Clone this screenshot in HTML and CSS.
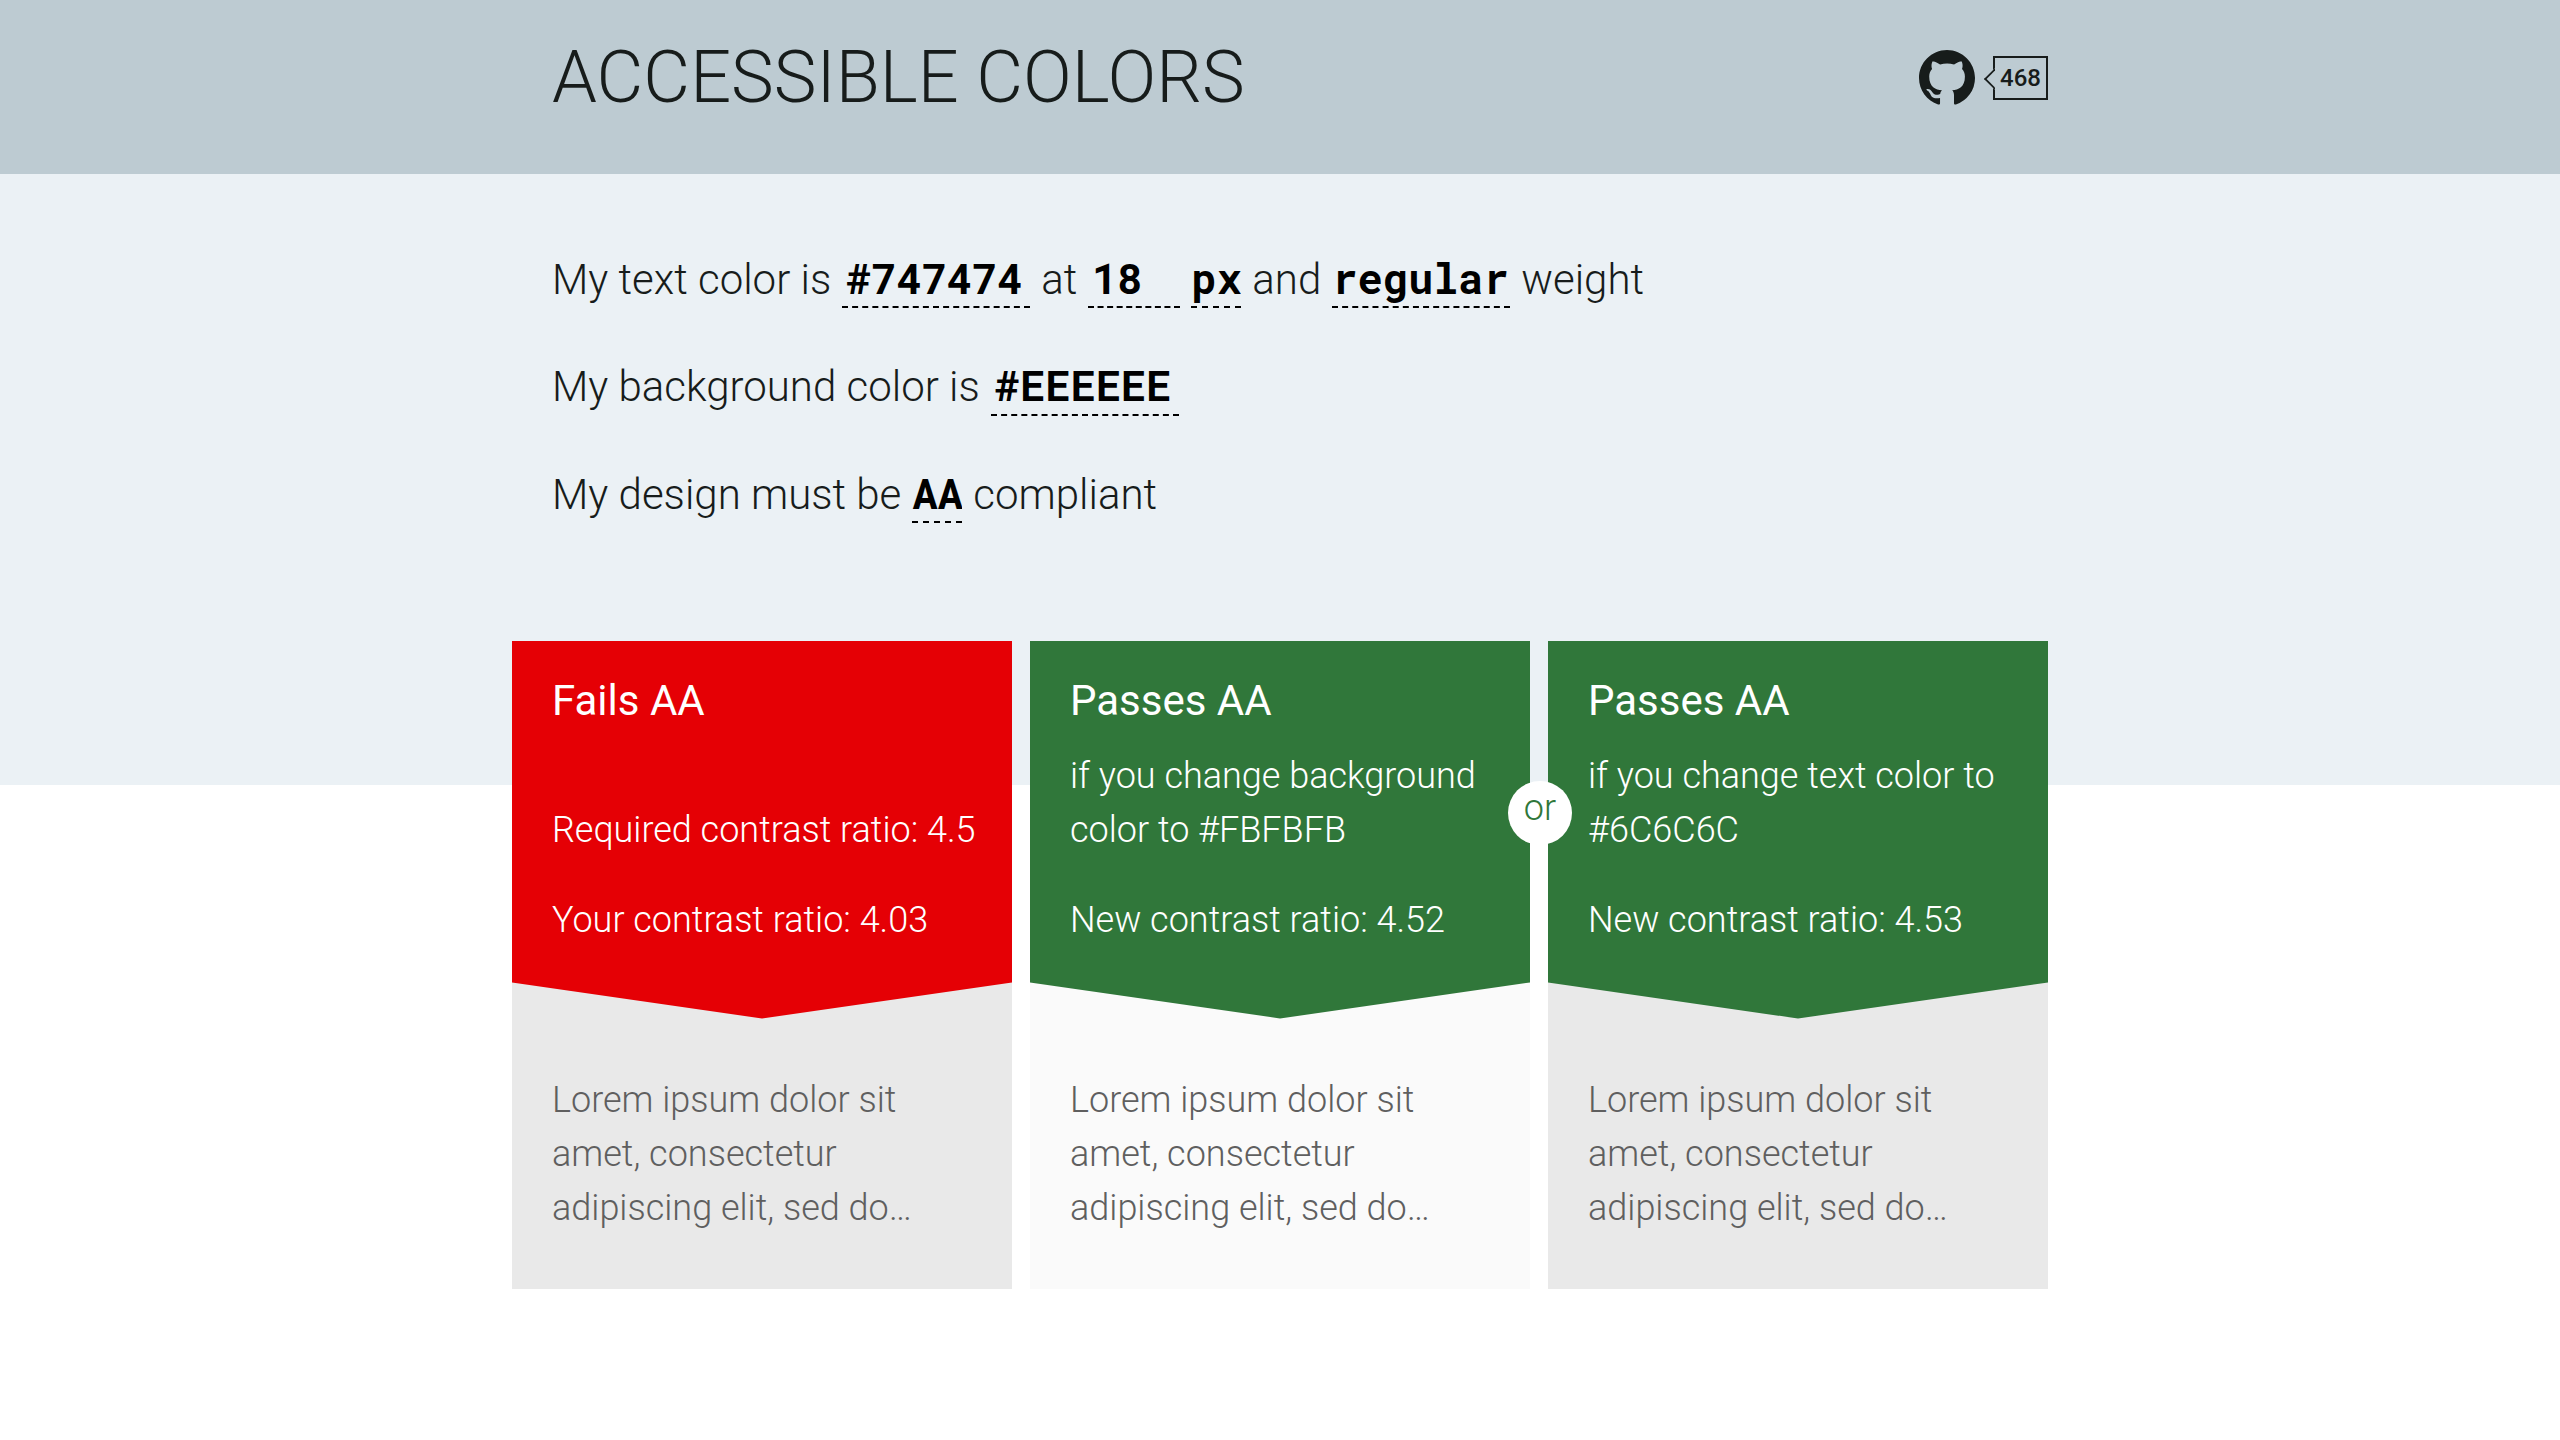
FILE: index.html
```html
<!DOCTYPE html>
<html lang="en">
<head>
    <meta charset="UTF-8">
    <meta name="viewport" content="width=device-width, initial-scale=1.0">
    <title>Accessible Colors</title>
    <link rel="stylesheet" href="styles.css">
</head>
<body>
    <header class="header">
        <div class="container header__inner">
            <h1 class="header__title">Accessible Colors</h1>
            <div class="github">
                <a class="github__link" href="#" aria-label="GitHub">
                    <svg class="github__icon" viewBox="0 0 16 16" aria-hidden="true">
                        <path d="M8 0C3.58 0 0 3.58 0 8c0 3.54 2.29 6.53 5.47 7.59.4.07.55-.17.55-.38 0-.19-.01-.82-.01-1.49-2.01.37-2.53-.49-2.69-.94-.09-.23-.48-.94-.82-1.13-.28-.15-.68-.52-.01-.53.63-.01 1.08.58 1.23.82.72 1.21 1.87.87 2.33.66.07-.52.28-.87.51-1.07-1.78-.2-3.64-.89-3.64-3.95 0-.87.31-1.59.82-2.15-.08-.2-.36-1.02.08-2.12 0 0 .67-.21 2.2.82.64-.18 1.32-.27 2-.27s1.36.09 2 .27c1.53-1.04 2.2-.82 2.2-.82.44 1.1.16 1.92.08 2.12.51.56.82 1.27.82 2.15 0 3.07-1.87 3.75-3.65 3.95.29.25.54.73.54 1.48 0 1.07-.01 1.93-.01 2.2 0 .21.15.46.55.38A8.01 8.01 0 0 0 16 8c0-4.42-3.58-8-8-8z"/>
                    </svg>
                </a>
                <a class="github__count" href="#">468</a>
            </div>
        </div>
    </header>
    <main>
        <form class="settings">
            <div class="container settings__inner">
                <div class="settings__row">
                    <label for="textColor">My text color is</label>
                    <input class="field field--color" type="text" id="textColor" value="#747474">
                    <label for="fontSize">at</label>
                    <input class="field field--size" type="text" id="fontSize" value="18">
                    <select class="field field--short" id="fontUnit" aria-label="Font size unit">
                        <option>px</option>
                        <option>pt</option>
                    </select>
                    <label for="fontWeight">and</label>
                    <select class="field field--weight" id="fontWeight">
                        <option>regular</option>
                        <option>bold</option>
                    </select>
                    <span>weight</span>
                </div>
                <div class="settings__row">
                    <label for="bgColor">My background color is</label>
                    <input class="field field--color" type="text" id="bgColor" value="#EEEEEE">
                </div>
                <div class="settings__row">
                    <label for="level">My design must be</label>
                    <select class="field field--short" id="level">
                        <option>AA</option>
                        <option>AAA</option>
                    </select>
                    <span>compliant</span>
                </div>
            </div>
        </form>
        <div class="container results">
            <section class="card card--fail">
                <div class="card__result">
                    <h2 class="card__title">Fails AA</h2>
                    <p class="card__text">Required contrast ratio: 4.5</p>
                    <p class="card__ratio">Your contrast ratio: 4.03</p>
                </div>
                <p class="card__sample">Lorem ipsum dolor sit amet, consectetur adipiscing elit, sed do…</p>
            </section>
            <section class="card card--background">
                <div class="card__result">
                    <h2 class="card__title">Passes AA</h2>
                    <p class="card__text">if you change background color to #FBFBFB</p>
                    <p class="card__ratio">New contrast ratio: 4.52</p>
                </div>
                <p class="card__sample">Lorem ipsum dolor sit amet, consectetur adipiscing elit, sed do…</p>
                <span class="card__or">or</span>
            </section>
            <section class="card card--text">
                <div class="card__result">
                    <h2 class="card__title">Passes AA</h2>
                    <p class="card__text">if you change text color to #6C6C6C</p>
                    <p class="card__ratio">New contrast ratio: 4.53</p>
                </div>
                <p class="card__sample">Lorem ipsum dolor sit amet, consectetur adipiscing elit, sed do…</p>
            </section>
        </div>
    </main>
</body>
</html>
```
FILE: styles.css
```css
* {
    margin: 0;
    padding: 0;
    box-sizing: border-box;
}

body {
    background-color: #fff;
    color: #171c1b;
    font-family: Roboto, sans-serif;
    font-size: 36px;
    font-weight: 300;
    line-height: 54px;
}

.container {
    width: 60%;
    margin: 0 auto;
}

.header {
    background-color: #bdcbd2;
}

.header__inner {
    display: flex;
    align-items: center;
    justify-content: space-between;
    padding: 24px 0 42px 40px;
}

.header__title {
    font-size: 72px;
    font-weight: 300;
    line-height: 108px;
    text-transform: uppercase;
}

.github {
    display: flex;
    align-items: center;
    gap: 18px;
}

.github__link {
    display: flex;
}

.github__icon {
    width: 56px;
    height: 56px;
    fill: #171c1b;
}

.github__count {
    position: relative;
    padding: 0 5px;
    border: 2px solid #171c1b;
    color: #171c1b;
    font-size: 24px;
    font-weight: 500;
    line-height: 40px;
    text-decoration: none;
}

/* little arrow pointing at the icon */
.github__count::before {
    content: '';
    position: absolute;
    top: 13px;
    left: -8px;
    width: 14px;
    height: 14px;
    border-left: 2px solid #171c1b;
    border-bottom: 2px solid #171c1b;
    background-color: #bdcbd2;
    transform: rotate(45deg);
    clip-path: polygon(0 0, 100% 100%, 0 100%);
}

.settings {
    background-color: #ebf1f5;
    font-size: 42px;
}

.settings__inner {
    display: flex;
    flex-direction: column;
    gap: 46px;
    padding: 74px 40px 260px;
}

.settings__row {
    display: flex;
    flex-wrap: wrap;
    align-items: baseline;
    gap: 11px;
    line-height: 60px;
}

.field {
    height: 60px;
    border: 0;
    border-bottom: 2px dashed #000;
    border-radius: 0;
    outline: none;
    appearance: none;
    background: none;
    color: #000;
    font-family: "Roboto Mono", "Liberation Mono", monospace;
    font-size: 42px;
    font-weight: 700;
}

.field--color {
    width: 188px;
    padding: 0 4px;
}

.field--size {
    width: 92px;
    padding: 0 4px;
}

.field--short {
    width: 50px;
}

.field--weight {
    width: 178px;
}

.results {
    display: grid;
    grid-template-columns: repeat(3, 1fr);
    gap: 18px;
    margin-top: -144px;
}

.card {
    position: relative;
    display: flex;
    flex-direction: column;
    background-color: #e9e9e9;
}

.card__result {
    display: flex;
    flex-direction: column;
    height: 378px;
    padding: 30px 32px 0 40px;
    background-color: #30773a;
    color: #fff;
    clip-path: polygon(0 0, 100% 0, 100% 342px, 50% 100%, 0 342px);
}

.card--fail .card__result {
    background-color: #e50005;
}

.card__title {
    font-size: 42px;
    font-weight: 400;
    line-height: 60px;
}

.card__text {
    display: flex;
    align-items: flex-end;
    height: 108px;
    margin: 18px 0 36px;
}

.card__sample {
    padding: 54px 40px 54px;
    color: #5f5f5f;
}

.card--background {
    background-color: #fafafa;
}

.card__or {
    position: absolute;
    top: 140px;
    right: -42px;
    z-index: 1;
    width: 64px;
    height: 64px;
    border-radius: 50%;
    background-color: #fff;
    color: #30773a;
    text-align: center;
}
```
